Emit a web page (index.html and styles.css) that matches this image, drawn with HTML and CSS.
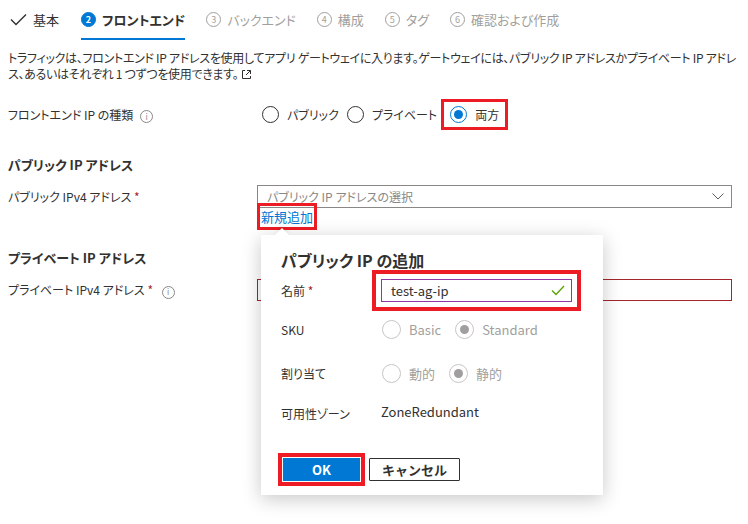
FILE: index.html
```html
<!DOCTYPE html>
<html lang="ja">
<head>
  <meta charset="UTF-8"/>
  <title>アプリケーション ゲートウェイの作成</title>
  <link rel="stylesheet" href="styles.css">
</head>
<body>
<!-- tabs -->
  <div class="tabs">
    <div class="tab done">
      <svg class="check" width="17" height="13" viewBox="0 0 17 13"><polyline points="1,6.5 6,11.5 16,1.5" fill="none" stroke="#323130" stroke-width="1.4"/></svg>
      基本
    </div>
    <div class="tab active"><span class="num">2</span>フロントエンド</div>
    <div class="tab"><span class="num">3</span>バックエンド</div>
    <div class="tab"><span class="num">4</span>構成</div>
    <div class="tab"><span class="num">5</span>タグ</div>
    <div class="tab"><span class="num">6</span>確認および作成</div>
  </div>

  <p class="desc">トラフィックは、フロントエンド IP アドレスを使用してアプリ ゲートウェイに入ります。ゲートウェイには、パブリック IP アドレスかプライベート IP アドレス、あるいはそれぞれ 1 つずつを使用できます。<svg class="ext" width="11" height="11" viewBox="0 0 11 11"><path d="M4 1.5H1.5v8h8V7M6 1.5h3.5V5M9.5 1.5 5 6" fill="none" stroke="#323130" stroke-width="1"/></svg></p>

<!-- -------------------------------------------------------------------------- -->
  <div class="field type-row">
    <label>フロントエンド IP の種類 <span class="info">i</span></label>
    <div class="radios">
      <span class="radio"><span class="dot"></span>パブリック</span>
      <span class="radio"><span class="dot"></span>プライベート</span>
      <span class="radio checked mark"><span class="dot"></span>両方</span>
    </div>
  </div>

  <h3>パブリック IP アドレス</h3>
  <div class="field">
    <label>パブリック IPv4 アドレス <span class="req">*</span></label>
    <div class="select">
      <span>パブリック IP アドレスの選択</span>
      <svg width="12" height="7" viewBox="0 0 12 7"><polyline points="0.5,0.5 6,6 11.5,0.5" fill="none" stroke="#605e5c" stroke-width="1"/></svg>
    </div>
  </div>
  <div class="field link-row">
    <span></span>
    <div><a class="new-link" href="#">新規追加</a></div>
  </div>

  <h3 class="private">プライベート IP アドレス</h3>
  <div class="field">
    <label>プライベート IPv4 アドレス <span class="req">*</span> <span class="info gap">i</span></label>
    <div class="text-input error"></div>
  </div>

<!-- popup -->
  <div class="callout">
    <div class="beak"></div>
    <h2>パブリック IP の追加</h2>
    <div class="pop-row row-name">
      <label>名前 <span class="req">*</span></label>
      <div class="name-input">
        <span>test-ag-ip</span>
        <svg width="14" height="11" viewBox="0 0 14 11"><polyline points="1,5.5 5,9.5 13,1" fill="none" stroke="#57a300" stroke-width="1.3"/></svg>
      </div>
    </div>
    <div class="pop-row row-sku">
      <label>SKU</label>
      <div class="radios off">
        <span class="radio"><span class="dot"></span>Basic</span>
        <span class="radio checked"><span class="dot"></span>Standard</span>
      </div>
    </div>
    <div class="pop-row row-alloc">
      <label>割り当て</label>
      <div class="radios off">
        <span class="radio"><span class="dot"></span>動的</span>
        <span class="radio checked"><span class="dot"></span>静的</span>
      </div>
    </div>
    <div class="pop-row row-zone">
      <label>可用性ゾーン</label>
      <div class="value">ZoneRedundant</div>
    </div>
    <div class="buttons">
      <button class="ok">OK</button>
      <button class="cancel">キャンセル</button>
    </div>
  </div>
</body>
</html>
```
FILE: styles.css
```css
  :root {
    --fg: #323130;
    --muted: #a19f9d;
    --blue: #0078d4;
    --mark: #ed1c24;
  }

  body {
    font-family: 'Noto Sans CJK JP', 'Noto Sans', sans-serif;
    font-size: 12px;
    font-feature-settings: "palt";
    color: var(--fg);
    margin: 0;
    padding: 0 16px 0 8px;
    background: #fff;
    position: relative;
    height: 524px;
    overflow: hidden;
  }

  .tabs {
    display: flex;
    height: 40px;
    padding-left: 2px;
  }

  .tab {
    display: flex;
    align-items: center;
    gap: 6px;
    font-size: 13px;
    color: #a19f9d;
    margin-right: 21px;
    height: 38px;
    border-bottom: 2px solid transparent;
  }

  .tab.done {
    color: var(--fg);
    gap: 6px;
    margin-right: 22px;
  }

  .tab.active {
    color: var(--fg);
    font-weight: bold;
    border-bottom-color: var(--blue);
  }

  .num {
    width: 13px;
    height: 13px;
    border: 1px solid #a19f9d;
    border-radius: 50%;
    font-size: 9px;
    display: flex;
    align-items: center;
    justify-content: center;
    font-weight: normal;
    line-height: 1;
  }

  .tab.active .num {
    background: var(--blue);
    border-color: var(--blue);
    color: #fff;
    font-weight: bold;
  }

  .desc {
    margin: 10px -12px 0 0;
    line-height: 16px;
    letter-spacing: -0.3px;
  }

  .ext {
    margin-left: 3px;
    vertical-align: -1px;
  }

  .field {
    display: grid;
    grid-template-columns: 249px 1fr;
    align-items: center;
  }

  .type-row {
    margin-top: 17px;
    height: 30px;
  }

  label {
    font-size: 12px;
  }

  .req {
    color: #a4262c;
  }

  .info {
    display: inline-flex;
    width: 11px;
    height: 11px;
    border: 1px solid #8a8886;
    border-radius: 50%;
    font-size: 8px;
    color: #8a8886;
    align-items: center;
    justify-content: center;
    margin-left: 4px;
    vertical-align: 0;
    line-height: 1;
  }

  .info.gap {
    margin-left: 6px;
  }

  .radios {
    display: flex;
    align-items: center;
    gap: 8px;
    margin-left: 5px;
  }

  .radio {
    display: inline-flex;
    align-items: center;
    gap: 8px;
  }

  .dot {
    width: 15px;
    height: 15px;
    border: 1px solid #323130;
    border-radius: 50%;
    display: inline-flex;
    align-items: center;
    justify-content: center;
  }

  .radio.checked .dot {
    border-color: var(--blue);
  }

  .radio.checked .dot::after {
    content: "";
    width: 9px;
    height: 9px;
    border-radius: 50%;
    background: var(--blue);
  }

  .radio.mark {
    border: 3px solid var(--mark);
    padding: 4px 6px 4px 6px;
    margin-left: -4px;
  }

  h3 {
    font-size: 13px;
    font-weight: bold;
    margin: 26px 0 11px;
  }

  .select {
    height: 21px;
    border: 1px solid #8a8886;
    display: flex;
    align-items: center;
    justify-content: space-between;
    padding: 0 7px 0 9px;
    color: #8a8886;
  }

  .link-row {
    margin-top: -1px;
  }

  .new-link {
    color: var(--blue);
    text-decoration: none;
    font-size: 13px;
    margin-left: 4px;
    outline: 3px solid var(--mark);
    outline-offset: 1px;
  }

  h3.private {
    margin-top: 22px;
    margin-bottom: 12px;
  }

  .text-input {
    height: 20px;
  }

  .text-input.error {
    border: 1px solid #a4262c;
  }

  /* popup overlay */
  .callout {
    position: absolute;
    left: 261px;
    top: 235px;
    width: 302px;
    padding: 14px 20px 14px 20px;
    background: #fff;
    box-shadow: 0 4px 18px rgba(0,0,0,0.22);
  }

  .beak {
    position: absolute;
    left: 16px;
    top: -5px;
    width: 10px;
    height: 10px;
    background: #fff;
    transform: rotate(45deg);
    box-shadow: -2px -2px 4px rgba(0,0,0,0.06);
  }

  .callout h2 {
    font-size: 16px;
    font-weight: bold;
    margin: 0;
    line-height: 22px;
    position: relative;
  }

  .pop-row {
    display: grid;
    grid-template-columns: 100px 1fr;
    align-items: center;
  }

  .row-name { height: 38px; }
  .row-sku { height: 40px; }
  .row-alloc { height: 48px; }
  .row-zone { height: 32px; }

  .name-input {
    height: 21px;
    border: 1px solid #8e37a5;
    display: flex;
    align-items: center;
    justify-content: space-between;
    padding: 0 6px 0 9px;
    font-size: 13px;
    outline: 4px solid var(--mark);
    outline-offset: 5px;
    margin-right: 11px;
  }

  .radios.off {
    color: var(--muted);
    font-size: 13px;
    margin-left: 1px;
    gap: 14px;
  }

  .radios.off .dot {
    width: 17px;
    height: 17px;
    border-color: #c8c6c4;
  }

  .radios.off .radio.checked .dot::after {
    background: #a19f9d;
  }

  .value {
    font-size: 13px;
    margin-top: -4px;
  }

  .buttons {
    display: flex;
    gap: 9px;
    margin-top: 29px;
    margin-left: 2px;
  }

  button {
    font-family: inherit;
    font-size: 13px;
    font-weight: bold;
    height: 23px;
    cursor: pointer;
  }

  .ok {
    width: 77px;
    border: none;
    background: var(--blue);
    color: #fff;
    outline: 4px solid var(--mark);
    outline-offset: 1px;
  }

  .cancel {
    width: 91px;
    background: #fff;
    color: var(--fg);
    border: 1px solid #323130;
    border-radius: 1px;
  }
```
